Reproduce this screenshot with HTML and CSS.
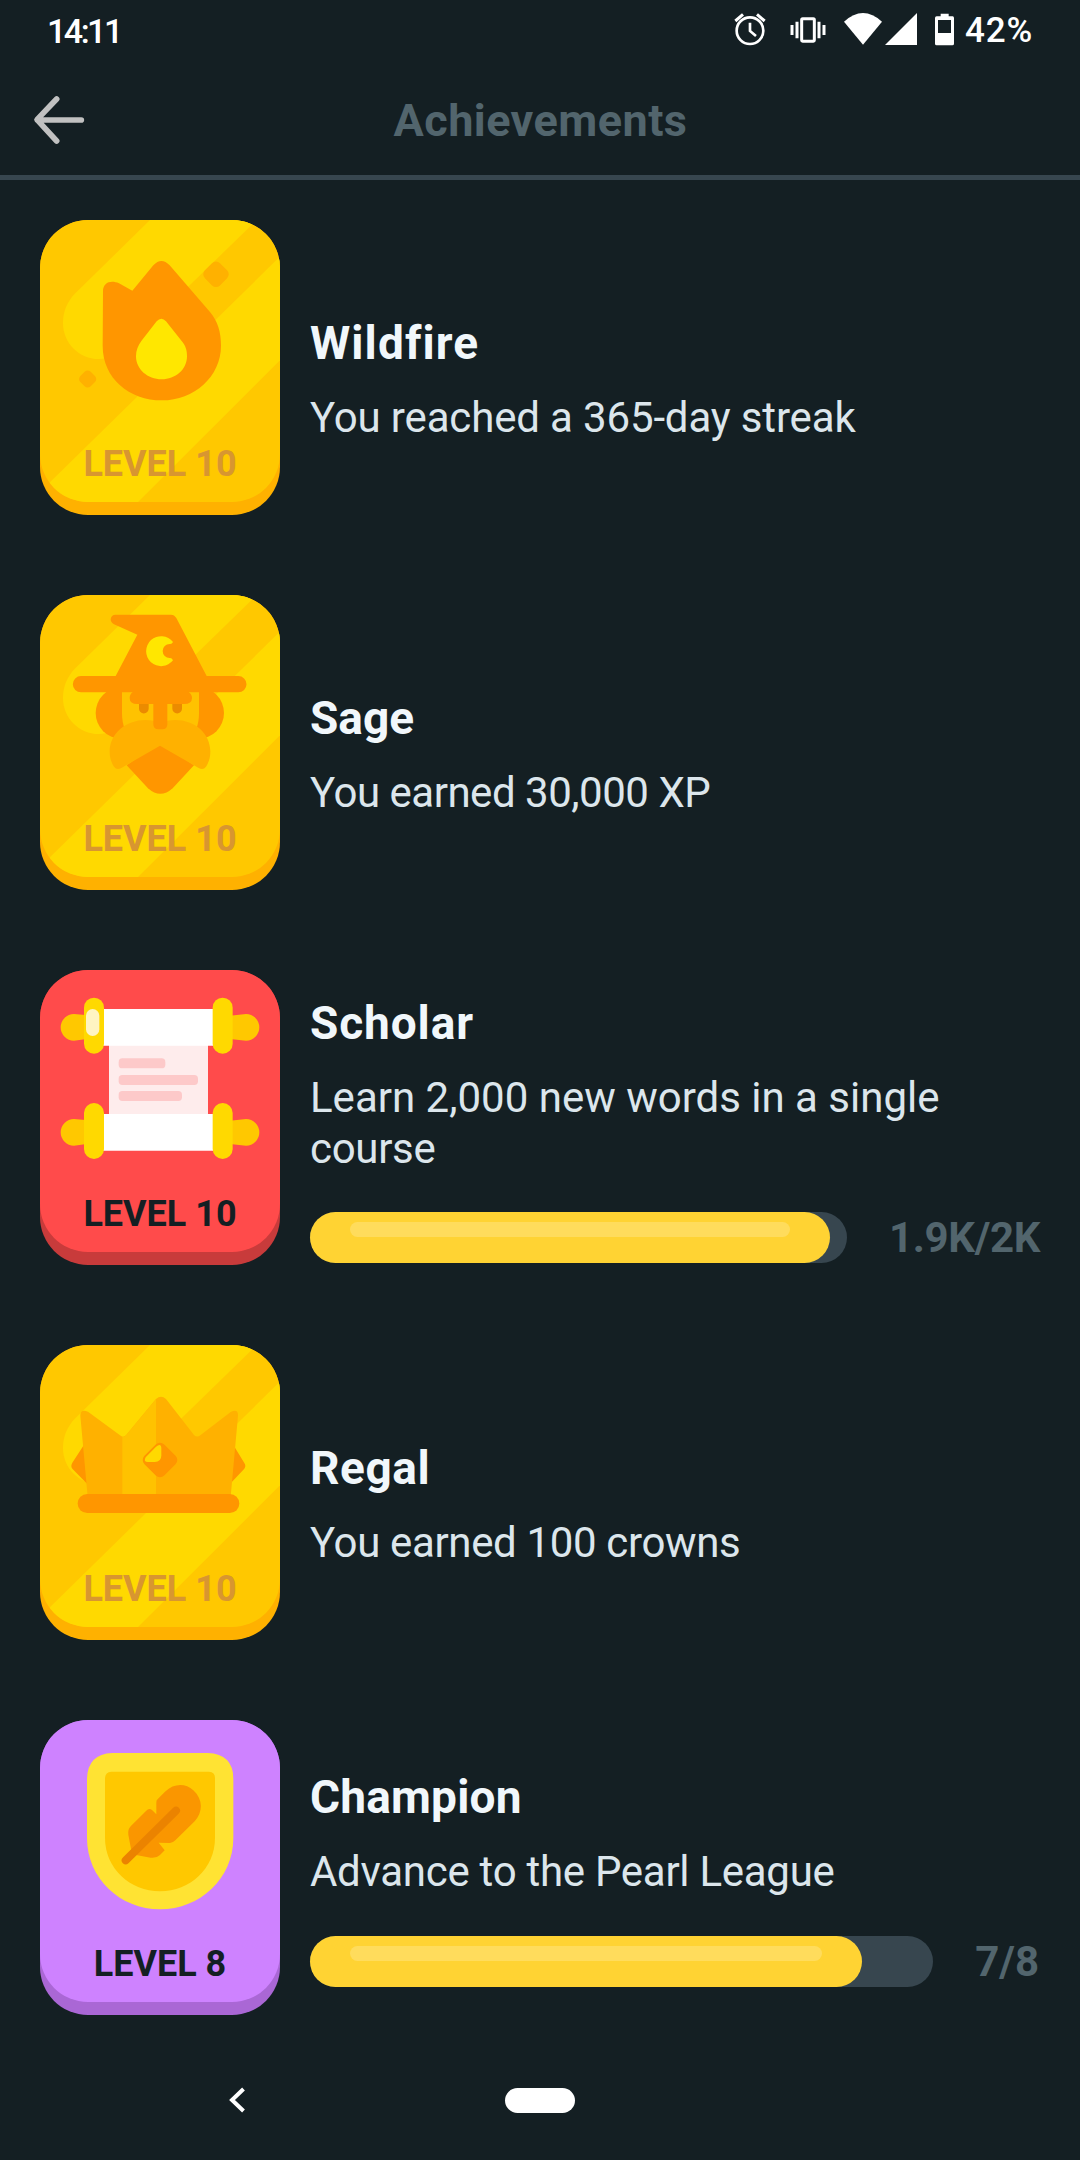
FILE: index.html
```html
<!DOCTYPE html>
<html lang="en">
<head>
<meta charset="utf-8">
<title>Achievements</title>
<link rel="stylesheet" href="styles.css">
</head>
<body>
<svg class="defs" width="0" height="0" aria-hidden="true">
  <defs>
    <clipPath id="face"><rect x="30" y="30" width="720" height="846" rx="144"/></clipPath>
    <g id="gold">
      <rect x="30" y="30" width="720" height="885" rx="144" fill="#ffb100"/>
      <g clip-path="url(#face)">
        <rect x="30" y="30" width="720" height="846" fill="#ffc800"/>
        <path d="M360 30H680L285 415C262 437 236 447 206 447C147 447 99 399 99 338C99 305 112 274 136 250Z" fill="#ffd900"/>
        <path d="M760 130L30 846V900H300L760 441Z" fill="#ffd900"/>
      </g>
    </g>
  </defs>
</svg>
<div class="screen">
  <header class="status">
    <span class="clock">14:11</span>
    <div class="status-icons">
      <svg class="i-alarm" viewBox="100 36 98 104"><g fill="none" stroke="#fff"><circle cx="148" cy="92" r="40" stroke-width="8"/><path d="M148 68V93L166 108" stroke-width="8"/><path d="M104 63L127 43M192 63L169 43" stroke-width="9"/></g></svg>
      <svg class="i-vibrate" viewBox="264 36 114 104"><rect x="302" y="56" width="38" height="68" rx="3" fill="none" stroke="#fff" stroke-width="9"/><path d="M273 75V105M288 65V115M354 65V115M369 75V105" stroke="#fff" stroke-width="9"/></svg>
      <svg class="i-signal" viewBox="426 36 228 104" fill="#fff"><path d="M429 65Q486 13 543 65L486 134Z"/><path d="M648 39V135H552Z"/></svg>
      <svg class="i-battery" viewBox="699 36 63 104"><path fill="#fff" fill-rule="evenodd" d="M719 41H743V49H755Q759 49 759 54V131Q759 136 754 136H707Q702 136 702 131V54Q702 49 707 49H719ZM711 60V99H750V60Z"/></svg>
      <span class="percent">42%</span>
    </div>
  </header>
  <nav class="topbar">
    <svg class="back" viewBox="96 282 162 156"><path d="M244 360H112M170 297L111 359L170 423" fill="none" stroke="#c1c1c1" stroke-width="17" stroke-linecap="round" stroke-linejoin="round"/></svg>
    <h1>Achievements</h1>
  </nav>
  <main class="list">
    <section class="row">
      <div class="badge gold">
        <svg viewBox="30 30 720 885">
          <use href="#gold"/>
          <g fill="#ffb100"><rect x="526" y="161" width="64" height="64" rx="17" transform="rotate(45 558 193)"/><rect x="151" y="485" width="44" height="44" rx="13" transform="rotate(45 173 507)"/></g>
          <path d="M219 244C219 218 242 209 267 220L307 242L370 166Q394 140 419 166L540 306C563 334 573 365 573 407C573 500 492 571 396 571C298 571 218 505 218 407Z" fill="#ff9600"/>
          <path d="M380 334Q394 318 408 334L455 393C467 407 471 421 471 439C471 479 436 508 395 508C353 508 318 478 318 439C318 421 324 407 334 393Z" fill="#ffe700"/>
        </svg>
        <span class="level">LEVEL 10</span>
      </div>
      <div class="info"><h2 class="t1">Wildfire</h2><p class="d1">You reached a 365-day streak</p></div>
    </section>
    <section class="row">
      <div class="badge gold">
        <svg viewBox="30 30 720 885">
          <use href="#gold"/>
          <g fill="#ff9600"><circle cx="274" cy="384" r="77"/><circle cx="505" cy="384" r="77"/></g>
          <path d="M276 300H507V385C507 460 455 500 391 500S276 460 276 385Z" fill="#ffc200"/>
          <path d="M327 350H356V371A14.500 14.500 0 0 1 327 371ZM427 350H456V371A14.500 14.500 0 0 1 427 371Z" fill="#eb8b00"/>
          <path d="M390 470L492 541L428 610Q391 643 354 610L290 541Z" fill="#ff9600"/>
          <path d="M346 405Q371 405 391 414Q411 405 436 405C495 405 541 446 541 500C541 518 536 533 528 545Q520 556 506 549L390 482L274 549Q260 556 252 545C244 533 239 518 239 500C239 446 288 405 346 405Z" fill="#ffb100"/>
          <path d="M257 89H423Q433 89 439 99L530 273H625A24.500 24.500 0 0 1 625 322H476Q486 328 486 339Q486 357 462 357H412V418Q412 433 397 433H385Q370 433 370 418V357H322Q299 357 299 339Q299 328 308 322H153A24.500 24.500 0 0 1 153 273H257L322 149L252 118Q242 112 242 103Q243 89 257 89Z" fill="#ff9600"/>
          <path d="M429 171A45 45 0 1 0 429 226Q425 218 419 219A21 21 0 0 1 419 177Q426 178 429 171Z" fill="#ffe700"/>
        </svg>
        <span class="level">LEVEL 10</span>
      </div>
      <div class="info"><h2>Sage</h2><p class="d2">You earned 30,000 XP</p></div>
    </section>
    <section class="row">
      <div class="badge">
        <svg viewBox="30 30 720 885">
          <rect x="30" y="30" width="720" height="885" rx="144" fill="#c83b3b"/>
          <rect x="30" y="30" width="720" height="846" rx="144" fill="#ff4b4b"/>
          <rect x="237" y="250" width="297" height="220" fill="#feecec"/>
          <g fill="#fdc9c9"><rect x="266" y="295" width="140" height="30" rx="11"/><rect x="266" y="345" width="238" height="30" rx="11"/><rect x="266" y="393" width="190" height="30" rx="11"/></g>
          <path d="M210 147H560V257H210ZM210 462H560V572H210Z" fill="#fff"/>
          <g fill="#ffc800"><path id="knobs" d="M175 166L132 162A40 40 0 0 0 132 242L175 236ZM600 167L648 162A40 40 0 0 1 648 242L600 237Z"/><use href="#knobs" y="315"/></g>
          <g fill="#ffd900"><rect x="162" y="113" width="60" height="168" rx="30"/><rect x="548" y="113" width="60" height="168" rx="30"/><rect x="162" y="429" width="60" height="168" rx="30"/><rect x="548" y="429" width="60" height="168" rx="30"/></g>
          <rect x="168" y="147" width="40" height="81" rx="20" fill="#fff4c2"/>
        </svg>
        <span class="level">LEVEL 10</span>
      </div>
      <div class="info">
        <h2 class="t3">Scholar</h2><p>Learn 2,000 new words in a single<br><span class="d3">course</span></p>
        <div class="progress"><div class="track"><div class="fill" style="width:520px"></div></div><span class="count">1.9K/2K</span></div>
      </div>
    </section>
    <section class="row">
      <div class="badge gold">
        <svg viewBox="30 30 720 885">
          <use href="#gold"/>
          <path d="M165 325L127 383Q121 393 127 401L180 455ZM610 330L643 384Q649 393 643 401L597 450Z" fill="#ff9600"/>
          <path d="M151 242Q151 220 174 230L270 301Q279 309 288 301L378 192Q393 178 408 192L492 300Q501 309 511 301L602 231Q625 220 624 242L602 485H173Z" fill="#ffb100"/>
          <path d="M277 306Q284 307 288 301L378 192V485H277Z" fill="#ffc200"/>
          <rect x="348" y="333" width="84" height="84" rx="18" transform="rotate(45 390 375)" fill="#ff9600"/>
          <path d="M347 367L378 335Q393 323 394 339V361Q394 381 374 381H354Q339 381 347 367Z" fill="#ffd900"/>
          <rect x="143" y="477" width="485" height="57" rx="28.500" fill="#ff9600"/>
        </svg>
        <span class="level">LEVEL 10</span>
      </div>
      <div class="info"><h2 class="t4">Regal</h2><p class="d4">You earned 100 crowns</p></div>
    </section>
    <section class="row">
      <div class="badge">
        <svg viewBox="30 30 720 885">
          <rect x="30" y="30" width="720" height="885" rx="144" fill="#aa67d5"/>
          <rect x="30" y="30" width="720" height="846" rx="144" fill="#ce82ff"/>
          <path d="M247 129H533Q610 132 610 206V384C610 505 510 598 390 598S171 505 171 384V206Q173 132 247 129Z" fill="#ffe333"/>
          <path d="M244 185H537Q555 186 555 204V384C555 475 480 544 390 544S225 475 225 384V204Q226 186 244 185Z" fill="#ffc800"/>
          <path d="M405 245C433 219 467 220 490 241C520 268 519 307 494 334L436 391Q428 399 420 399L386 398L404 421L390 435Q380 445 362 443L306 433L295 374Q293 358 302 349L348 303Q357 292 366 300L379 313V278Q378 271 384 266Z" fill="#fa9600"/>
          <path d="M287 451L438 302" stroke="#eb8300" stroke-width="24" stroke-linecap="round"/>
        </svg>
        <span class="level">LEVEL 8</span>
      </div>
      <div class="info short">
        <h2 class="t5">Champion</h2><p class="d5">Advance to the Pearl League</p>
        <div class="progress"><div class="track"><div class="fill" style="width:552px"></div></div><span class="count">7/8</span></div>
      </div>
    </section>
  </main>
  <footer class="navbar">
    <svg class="nav-back" viewBox="0 0 20 30"><path d="M16.500 4L5 15L16.500 26" fill="none" stroke="#fff" stroke-width="4"/></svg>
    <div class="pill"></div>
    <div></div>
  </footer>
</div>
</body>
</html>
```
FILE: styles.css
```css
* { box-sizing: border-box; }
body { margin: 0; background: #141f23; font-family: Roboto, "Liberation Sans", sans-serif; }
h1, h2, p { margin: 0; }
svg { display: block; }
.defs { position: absolute; }
.screen { width: 1080px; height: 2160px; overflow: hidden; display: flex; flex-direction: column; }

.status { height: 60px; padding: 0 47px; display: flex; justify-content: space-between; align-items: flex-start; color: #fff; font-size: 34px; font-weight: 500; line-height: 62px; }
.clock { letter-spacing: -2.5px; }
.percent { margin-left: 10px; font-size: 35px; letter-spacing: 0.8px; }
.status-icons { display: flex; align-items: flex-start; }
.status-icons svg { height: 34.670px; margin-top: 12px; }
.i-alarm { width: 32.670px; }
.i-vibrate { width: 38px; margin-left: 22px; }
.i-signal { width: 76px; margin-left: 16px; }
.i-battery { width: 21px; margin-left: 15px; }

.topbar { height: 120px; border-bottom: 5px solid #37464f; display: grid; grid-template-columns: 86px 1fr 86px; align-items: start; }
.back { width: 54px; height: 52px; margin: 34px 0 0 32px; }
h1 { text-align: center; color: #52656d; font-size: 45px; font-weight: 700; letter-spacing: 0.45px; line-height: 60px; margin-top: 31px; padding-left: 1px; }

.list { padding: 40px 40px 0; display: flex; flex-direction: column; gap: 80px; }
.row { height: 295px; display: flex; align-items: center; gap: 30px; }
.badge { width: 240px; height: 295px; flex: none; display: grid; color: #141f23; }
.badge > * { grid-area: 1 / 1; }
.badge svg { width: 240px; height: 295px; }
.level { align-self: end; text-align: center; font-size: 36px; font-weight: 700; line-height: 40px; margin-bottom: 31px; white-space: nowrap; }
.gold .level { color: #d89630; }
.info { flex: 1; padding-top: 23px; white-space: nowrap; }
.info.short { padding-bottom: 1px; }
h2 { color: #f1f7fb; font-size: 46px; font-weight: 700; line-height: 56px; }
p { color: #dce6ec; font-size: 42px; line-height: 51px; margin-top: 21px; }
.progress { margin-top: 38px; height: 51px; display: flex; align-items: center; gap: 42px; }
.short .progress { margin-top: 39px; }
.info.short { padding-top: 22px; }
.track { flex: 1; height: 51px; border-radius: 26px; background: #37464f; }
.fill { height: 51px; border-radius: 26px; background: #ffd333; padding: 10px 40px 0; }
.fill::before { content: ""; display: block; height: 15px; border-radius: 8px; background: #ffdc5c; }
.count { color: #52656d; font-size: 42px; font-weight: 700; letter-spacing: -0.35px; }
.short .count { letter-spacing: 0; margin-right: 1px; }

/* Optical tracking per line */
.t1 { letter-spacing: 1.1px; }
.t3 { letter-spacing: 0.9px; }
.t4 { letter-spacing: 0.55px; }
.t5 { letter-spacing: 0.2px; }
.d1 { letter-spacing: -0.15px; }
.d2 { letter-spacing: -0.48px; }
.d3 { letter-spacing: -0.3px; }
.d4 { letter-spacing: -0.35px; }
.d5 { letter-spacing: -0.28px; }

.navbar { margin-top: auto; height: 120px; display: grid; grid-template-columns: 505px 70px 505px; align-items: center; }
.nav-back { width: 20px; height: 30px; margin-left: 227px; }
.pill { height: 25px; border-radius: 13px; background: #fff; }
```
